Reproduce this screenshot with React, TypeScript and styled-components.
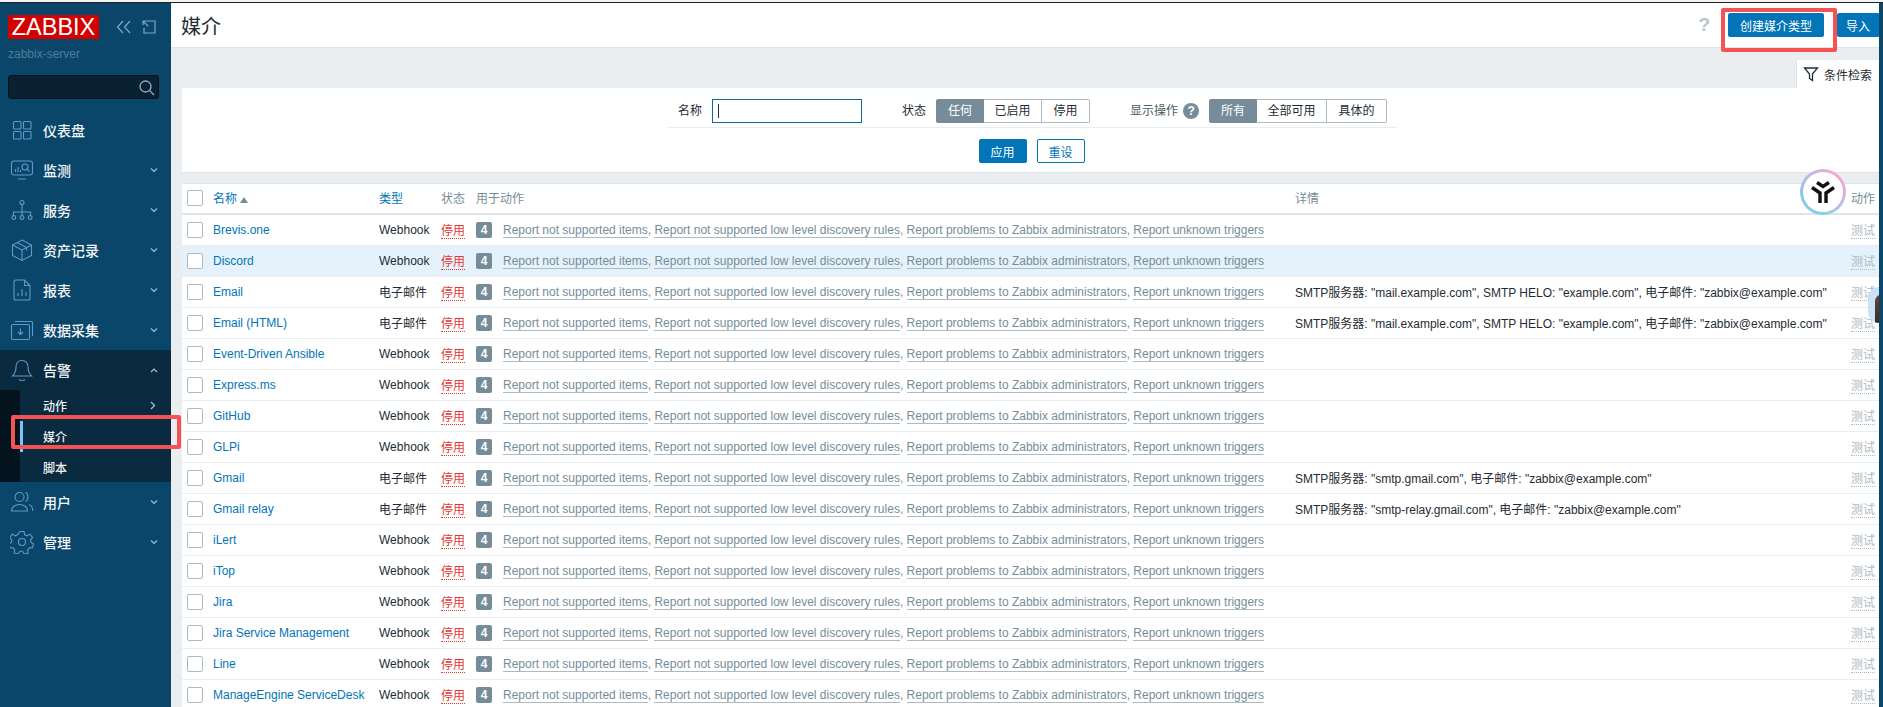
import React from "react";
import styled, { createGlobalStyle } from "styled-components";

const GlobalStyle = createGlobalStyle`
  html, body {
    margin: 0;
    padding: 0;
    background: #ebeef0;
  }
  body {
    font-family: "Liberation Sans", "Noto Sans CJK SC", sans-serif;
    font-size: 12px;
    color: #1f2c33;
  }
`;

const Page = styled.div`
  position: relative;
  display: flex;
  width: 1883px;
  height: 707px;
  overflow: hidden;
  box-sizing: border-box;
  padding-top: 3px;
  background: #ebeef0;
`;

const TopEdge = styled.div`
  position: absolute;
  left: 0;
  right: 0;
  top: 0;
  height: 3px;
  background: #f4f4f4;
  border-bottom: 1px solid #222;
  box-sizing: border-box;
`;

const Sidebar = styled.aside`
  flex: 0 0 171px;
  background: #0a466a;
  display: flex;
  flex-direction: column;
`;

const BrandRow = styled.div`
  display: flex;
  align-items: center;
  height: 24px;
  margin: 12px 0 0 8px;
`;

const Logo = styled.div`
  width: 91px;
  height: 24px;
  background: #d40000;
  color: #fff;
  font-size: 23.5px;
  line-height: 24px;
  text-align: center;
`;

const BrandIcon = styled.svg<{ $gap: number }>`
  width: 16px;
  height: 16px;
  margin-left: ${(p) => p.$gap}px;
  fill: none;
  stroke: #7ea8c7;
  stroke-width: 1.2;
`;

const ServerName = styled.div`
  margin: 8px 0 0 8px;
  height: 15px;
  line-height: 15px;
  font-size: 12px;
  color: #4f7c9a;
`;

const SearchBox = styled.div`
  margin: 13px 12px 0 8px;
  height: 24px;
  box-sizing: border-box;
  background: #0a2131;
  border: 1px solid #051420;
  border-radius: 3px;
  display: flex;
  align-items: center;
  justify-content: flex-end;
  padding-right: 3px;
`;

const SearchIcon = styled.svg`
  width: 17px;
  height: 17px;
  fill: none;
  stroke: #8fb0c8;
  stroke-width: 1.3;
`;

const Nav = styled.nav`
  margin-top: 11px;
  display: flex;
  flex-direction: column;
`;

const NavItem = styled.div<{ $open?: boolean }>`
  display: flex;
  align-items: center;
  height: 40px;
  padding-right: 13px;
  background: ${(p) => (p.$open ? "#0a2a40" : "transparent")};
  color: #f2f5f7;
  font-size: 14px;
  font-weight: 500;
`;

const NavIconSlot = styled.span`
  flex: 0 0 43px;
  display: flex;
  justify-content: center;
`;

const NavIcon = styled.svg`
  width: 24px;
  height: 24px;
  fill: none;
  stroke: #5f9ac6;
  stroke-width: 1.1;
`;

const NavLabel = styled.span`
  flex: 1;
`;

const Chevron = styled.svg`
  width: 8px;
  height: 6px;
  fill: none;
  stroke: #9cc0d8;
  stroke-width: 1.2;
`;

const SubMenu = styled.div`
  height: 92px;
  overflow: hidden;
  background: #04141f;
  padding-left: 20px;
`;

const SubItem = styled.div<{ $active?: boolean }>`
  display: flex;
  align-items: center;
  height: 31px;
  box-sizing: border-box;
  padding-left: ${(p) => (p.$active ? "20px" : "23px")};
  padding-right: 15px;
  background: #0a2a40;
  color: #eef2f5;
  font-size: 12px;
  font-weight: 500;
  border-left: ${(p) => (p.$active ? "3px solid #7cc4f8" : "0")};
`;

const SubLabel = styled.span`
  flex: 1;
`;

const SubChevron = styled.svg`
  width: 6px;
  height: 9px;
  fill: none;
  stroke: #9cc0d8;
  stroke-width: 1.3;
`;

const Main = styled.main`
  flex: 1;
  min-width: 0;
  display: flex;
  flex-direction: column;
  border-right: 4px solid #0a466a;
`;

const Header = styled.header`
  height: 45px;
  flex: 0 0 45px;
  box-sizing: border-box;
  background: #fff;
  border-bottom: 1px solid #dfe4e7;
  display: flex;
  align-items: center;
  padding: 0 0 0 10px;
`;

const Title = styled.h1`
  flex: 1;
  margin: 0;
  font-size: 20px;
  font-weight: 400;
  color: #1f2c33;
`;

const HelpMark = styled.span`
  font-size: 19px;
  font-weight: 700;
  color: #b8c5cc;
  margin-right: 18px;
`;

const PrimaryButton = styled.button<{ $width: number }>`
  width: ${(p) => p.$width}px;
  height: 24px;
  padding: 0;
  border: 1px solid #0275b8;
  border-radius: 2px;
  background: #0275b8;
  color: #fff;
  font-family: inherit;
  font-size: 12px;
`;

const GhostButton = styled.button`
  width: 48px;
  height: 24px;
  padding: 0;
  margin-left: 10px;
  border: 1px solid #0275b8;
  border-radius: 2px;
  background: #fff;
  color: #0275b8;
  font-family: inherit;
  font-size: 12px;
`;

const HeaderImport = styled(PrimaryButton)`
  margin-left: 13px;
  border-radius: 2px 0 0 2px;
`;

const FilterTabs = styled.div`
  flex: 0 0 40px;
  height: 40px;
  display: flex;
  justify-content: flex-end;
  align-items: flex-end;
`;

const FilterTab = styled.div`
  width: 83px;
  height: 28px;
  box-sizing: border-box;
  background: #fff;
  border-left: 1px solid #dfe4e7;
  display: flex;
  align-items: center;
  gap: 5px;
  padding-left: 6px;
  color: #1f2c33;
`;

const FilterIcon = styled.svg`
  width: 16px;
  height: 16px;
  fill: none;
  stroke: #1f2c33;
  stroke-width: 1.3;
`;

const FilterPanel = styled.section`
  flex: 0 0 85px;
  height: 85px;
  box-sizing: border-box;
  margin-left: 11px;
  background: #fff;
  border-bottom: 1px solid #dfe4e7;
  display: flex;
  flex-direction: column;
  align-items: center;
  padding-left: 4px;
`;

const FilterFields = styled.div`
  width: 729px;
  height: 40px;
  box-sizing: border-box;
  border-bottom: 1px solid #ebeef0;
  padding: 11px 0 0 10px;
  display: flex;
  align-items: flex-start;
`;

const FieldLabel = styled.label`
  line-height: 24px;
  color: #1f2c33;
`;

const TextInput = styled.div`
  width: 150px;
  height: 24px;
  box-sizing: border-box;
  margin: 0 40px 0 10px;
  border: 1px solid #0a6ba0;
  display: flex;
  align-items: center;
  padding-left: 5px;
`;

const Caret = styled.span`
  width: 1px;
  height: 14px;
  background: #1f2c33;
`;

const Segments = styled.div`
  display: flex;
  height: 24px;
  margin-left: 10px;
`;

const Segment = styled.span<{ $on?: boolean; $width: number }>`
  width: ${(p) => p.$width}px;
  box-sizing: border-box;
  line-height: 22px;
  text-align: center;
  border: 1px solid ${(p) => (p.$on ? "#768d99" : "#acbbc2")};
  border-left-width: ${(p) => (p.$on ? "1px" : "0")};
  background: ${(p) => (p.$on ? "#768d99" : "#fff")};
  color: ${(p) => (p.$on ? "#fff" : "#1f2c33")};
  &:first-child {
    border-radius: 2px 0 0 2px;
  }
  &:last-child {
    border-radius: 0 2px 2px 0;
  }
`;

const ActionsLabel = styled(FieldLabel)`
  margin-left: 40px;
  color: #4e5c65;
`;

const HelpCircle = styled.span`
  width: 16px;
  height: 16px;
  margin: 4px 0 0 5px;
  border-radius: 50%;
  background: #768d99;
  color: #fff;
  font-size: 12px;
  font-weight: 700;
  line-height: 16px;
  text-align: center;
`;

const FilterButtons = styled.div`
  display: flex;
  padding: 11px 2px 0 0;
`;

const TableCard = styled.section`
  margin: 10px 0 0 11px;
  background: #fff;
  border-top: 1px solid #dfe4e7;
`;

const Table = styled.table`
  width: 100%;
  table-layout: fixed;
  border-collapse: collapse;
`;

const HeadCell = styled.th<{ $link?: boolean; $width?: number }>`
  width: ${(p) => (p.$width ? `${p.$width}px` : "auto")};
  height: 30px;
  padding: 0 0 2px;
  box-sizing: border-box;
  text-align: left;
  font-weight: 400;
  color: ${(p) => (p.$link ? "#0275b8" : "#768d99")};
  border-bottom: 2px solid #dfe4e7;
`;

const HeadCheck = styled.span`
  display: block;
  padding-left: 5px;
`;

const Row = styled.tr<{ $hover?: boolean }>`
  height: 31px;
  background: ${(p) => (p.$hover ? "#e5f2fb" : "#fff")};
  border-bottom: 1px solid #ebeef0;
`;

const Cell = styled.td`
  padding: 0;
  white-space: nowrap;
  overflow: hidden;
`;

const CheckCell = styled(Cell)`
  padding-left: 5px;
`;

const Check = styled.span`
  display: block;
  width: 16px;
  height: 16px;
  box-sizing: border-box;
  background: #fff;
  border: 1px solid #acbbc2;
  border-radius: 2px;
`;

const SortArrow = styled.span`
  display: inline-block;
  margin-left: 3px;
  border-left: 4px solid transparent;
  border-right: 4px solid transparent;
  border-bottom: 6px solid #768d99;
`;

const NameLink = styled.a`
  color: #0275b8;
`;

const Disabled = styled.span`
  color: #e33734;
  border-bottom: 1px dotted #e33734;
`;

const Badge = styled.span`
  display: inline-block;
  width: 16px;
  height: 16px;
  border-radius: 2px;
  background: #768d99;
  color: #fff;
  font-weight: 700;
  line-height: 16px;
  text-align: center;
  vertical-align: middle;
`;

const Actions = styled.span`
  margin-left: 11px;
  color: #768d99;
  vertical-align: middle;
`;

const ActionLink = styled.span`
  border-bottom: 1px solid #acbbc2;
`;

const TestLink = styled.span`
  color: #acbbc2;
  border-bottom: 1px dotted #acbbc2;
`;

const Annotation = styled.div<{ $x: number; $y: number; $w: number; $h: number }>`
  position: absolute;
  left: ${(p) => p.$x}px;
  top: ${(p) => p.$y}px;
  width: ${(p) => p.$w}px;
  height: ${(p) => p.$h}px;
  box-sizing: border-box;
  border: 4px solid #f55353;
  border-radius: 2px;
`;

const FloatBall = styled.div`
  position: absolute;
  left: 1800px;
  top: 169px;
  width: 46px;
  height: 46px;
  box-sizing: border-box;
  padding: 3px;
  border-radius: 50%;
  background: conic-gradient(from 200deg, #7fd0e8, #8cc4ea, #c4b6ea, #eeaad8, #e6a8dc, #a8c8ea, #7fd0e8);
`;

const FloatInner = styled.div`
  width: 100%;
  height: 100%;
  border-radius: 50%;
  background: #fff;
  display: flex;
  align-items: center;
  justify-content: center;
`;

const SideTab = styled.div`
  position: absolute;
  left: 1868px;
  top: 287px;
  width: 11px;
  height: 36px;
  border-radius: 18px 0 0 18px;
  background: #c8e2fb;
  overflow: hidden;
`;

const SideTabFigure = styled.div`
  margin: 8px 0 0 7px;
  width: 12px;
  height: 30px;
  border-radius: 6px 0 0 0;
  background: linear-gradient(#6b4436, #3c2620);
`;

const ICONS: Record<string, React.ReactNode> = {
  dashboard: (
    <>
      <rect x="3.5" y="3.5" width="7.5" height="7.5" rx="1" />
      <rect x="13.5" y="3.5" width="7.5" height="7.5" rx="1" />
      <rect x="3.5" y="13.5" width="7.5" height="7.5" rx="1" />
      <rect x="13.5" y="13.5" width="7.5" height="7.5" rx="1" />
    </>
  ),
  monitoring: (
    <>
      <rect x="1.5" y="3" width="21" height="14" rx="2.5" />
      <path d="M8 21h8M5.5 14v-3M8 14v-5M10.5 14v-2" />
      <circle cx="15" cy="9" r="3" />
      <path d="M17.2 11.2l2.3 2.3" />
    </>
  ),
  services: (
    <>
      <circle cx="12" cy="4.5" r="2" />
      <path d="M12 6.5V14M3.5 17v-3h17v3M12 14v3" />
      <circle cx="3.8" cy="19.5" r="1.9" />
      <circle cx="12" cy="19.5" r="1.9" />
      <circle cx="20.2" cy="19.5" r="1.9" />
    </>
  ),
  inventory: (
    <>
      <path d="M12 2l9.5 5v10.5L12 22.5l-9.5-5V7z" />
      <path d="M2.5 7l9.5 5 9.5-5M12 12v10.5M7 4.5l9.5 5v3" />
    </>
  ),
  reports: (
    <>
      <path d="M6 2h8.5L20 7.500V20a2 2 0 0 1-2 2H6a2 2 0 0 1-2-2V4a2 2 0 0 1 2-2z" />
      <path d="M14.500 2v5.500H20M8 18v-3M12 18v-7M16 18v-4" />
    </>
  ),
  collection: (
    <>
      <rect x="1.500" y="6.500" width="18" height="15" rx="1.500" />
      <path d="M5 3.500h16.500a1 1 0 0 1 1 1V18M10.500 10.500v6M8 14l2.500 2.500L13 14" />
    </>
  ),
  alerts: (
    <>
      <path d="M12 2.500c-4 0-6 3-6 6.500 0 4-1 6.500-3.500 9h19c-2.500-2.500-3.500-5-3.500-9 0-3.500-2-6.500-6-6.500z" />
      <path d="M9 21.500c1.500 1 4.500 1 6 0" />
    </>
  ),
  users: (
    <>
      <circle cx="9.500" cy="7" r="4.500" />
      <path d="M1.500 21c0-4 3.500-6.500 8-6.500s8 2.500 8 6.500h-16zM15.500 2.500c3 .8 3.500 7.500 0 9M19 14.500c2.500 1 3.800 3.500 3.800 6.500" />
    </>
  ),
  administration: (
    <>
      <circle cx="12" cy="12" r="3.500" />
      <path d="M10 1.500h4l.8 3.300 2.200 1 3-1.700 2.600 3.300-2 2.500.3 2.400 2.600 1.700-1 3.700-3.200.2-1.600 1.900.4 3.200-3.800 1-1.800-2.700h-2.600l-1.800 2.700-3.800-1 .4-3.200-1.600-1.900-3.200-.2-1-3.700 2.600-1.700.3-2.400-2-2.500 2.600-3.300 3 1.700 2.200-1z" />
    </>
  ),
};

const MENU_TOP = [
  { icon: "monitoring", label: "监测" },
  { icon: "services", label: "服务" },
  { icon: "inventory", label: "资产记录" },
  { icon: "reports", label: "报表" },
  { icon: "collection", label: "数据采集" },
];

const MENU_BOTTOM = [
  { icon: "users", label: "用户" },
  { icon: "administration", label: "管理" },
];

const SMTP_MAIL = 'SMTP服务器: "mail.example.com", SMTP HELO: "example.com", 电子邮件: "zabbix@example.com"';

const MEDIA: { name: string; type: string; details?: string }[] = [
  { name: "Brevis.one", type: "Webhook" },
  { name: "Discord", type: "Webhook" },
  { name: "Email", type: "电子邮件", details: SMTP_MAIL },
  { name: "Email (HTML)", type: "电子邮件", details: SMTP_MAIL },
  { name: "Event-Driven Ansible", type: "Webhook" },
  { name: "Express.ms", type: "Webhook" },
  { name: "GitHub", type: "Webhook" },
  { name: "GLPi", type: "Webhook" },
  { name: "Gmail", type: "电子邮件", details: 'SMTP服务器: "smtp.gmail.com", 电子邮件: "zabbix@example.com"' },
  { name: "Gmail relay", type: "电子邮件", details: 'SMTP服务器: "smtp-relay.gmail.com", 电子邮件: "zabbix@example.com"' },
  { name: "iLert", type: "Webhook" },
  { name: "iTop", type: "Webhook" },
  { name: "Jira", type: "Webhook" },
  { name: "Jira Service Management", type: "Webhook" },
  { name: "Line", type: "Webhook" },
  { name: "ManageEngine ServiceDesk", type: "Webhook" },
];

const ACTIONS = [
  "Report not supported items",
  "Report not supported low level discovery rules",
  "Report problems to Zabbix administrators",
  "Report unknown triggers",
];

function MenuRow({ icon, label, noArrow, open }: { icon: string; label: string; noArrow?: boolean; open?: boolean }) {
  return (
    <NavItem $open={open}>
      <NavIconSlot>
        <NavIcon viewBox="0 0 24 24">{ICONS[icon]}</NavIcon>
      </NavIconSlot>
      <NavLabel>{label}</NavLabel>
      {!noArrow && (
        <Chevron viewBox="0 0 8 6">
          <path d={open ? "M1 5l3-3 3 3" : "M1 1.500l3 3 3-3"} />
        </Chevron>
      )}
    </NavItem>
  );
}

function App() {
  return (
    <Page>
      <GlobalStyle />
      <TopEdge />
      <Sidebar>
        <BrandRow>
          <Logo>ZABBIX</Logo>
          <BrandIcon $gap={17} viewBox="0 0 16 16">
            <path d="M7 2L1.500 8 7 14M14 2L8.500 8 14 14" />
          </BrandIcon>
          <BrandIcon $gap={9} viewBox="0 0 16 16">
            <path d="M5 2h9v12H3V9M2 2l5 5M2 2h4M2 2v4" />
          </BrandIcon>
        </BrandRow>
        <ServerName>zabbix-server</ServerName>
        <SearchBox>
          <SearchIcon viewBox="0 0 17 17">
            <circle cx="7.500" cy="7.500" r="5.500" />
            <path d="M11.500 11.500l4.500 4.500" />
          </SearchIcon>
        </SearchBox>
        <Nav>
          <MenuRow icon="dashboard" label="仪表盘" noArrow />
          {MENU_TOP.map((m) => (
            <MenuRow key={m.label} icon={m.icon} label={m.label} />
          ))}
          <MenuRow icon="alerts" label="告警" open />
          <SubMenu>
            <SubItem>
              <SubLabel>动作</SubLabel>
              <SubChevron viewBox="0 0 6 9">
                <path d="M1 1l3.500 3.500L1 8" />
              </SubChevron>
            </SubItem>
            <SubItem $active>媒介</SubItem>
            <SubItem>脚本</SubItem>
          </SubMenu>
          {MENU_BOTTOM.map((m) => (
            <MenuRow key={m.label} icon={m.icon} label={m.label} />
          ))}
        </Nav>
      </Sidebar>

      <Main>
        <Header>
          <Title>媒介</Title>
          <HelpMark>?</HelpMark>
          <PrimaryButton $width={96}>创建媒介类型</PrimaryButton>
          <HeaderImport $width={42}>导入</HeaderImport>
        </Header>
        <FilterTabs>
          <FilterTab>
            <FilterIcon viewBox="0 0 16 16">
              <path d="M1.500 2h13L9.500 8v6.500l-3-2V8z" />
            </FilterIcon>
            条件检索
          </FilterTab>
        </FilterTabs>
        <FilterPanel>
          <FilterFields>
            <FieldLabel>名称</FieldLabel>
            <TextInput>
              <Caret />
            </TextInput>
            <FieldLabel>状态</FieldLabel>
            <Segments>
              <Segment $on $width={48}>任何</Segment>
              <Segment $width={58}>已启用</Segment>
              <Segment $width={48}>停用</Segment>
            </Segments>
            <ActionsLabel>显示操作</ActionsLabel>
            <HelpCircle>?</HelpCircle>
            <Segments>
              <Segment $on $width={48}>所有</Segment>
              <Segment $width={70}>全部可用</Segment>
              <Segment $width={60}>具体的</Segment>
            </Segments>
          </FilterFields>
          <FilterButtons>
            <PrimaryButton $width={48}>应用</PrimaryButton>
            <GhostButton>重设</GhostButton>
          </FilterButtons>
        </FilterPanel>
        <TableCard>
          <Table>
            <thead>
              <tr>
                <HeadCell $width={31}>
                  <HeadCheck>
                    <Check />
                  </HeadCheck>
                </HeadCell>
                <HeadCell $link $width={166}>
                  名称
                  <SortArrow />
                </HeadCell>
                <HeadCell $link $width={62}>类型</HeadCell>
                <HeadCell $width={35}>状态</HeadCell>
                <HeadCell $width={819}>用于动作</HeadCell>
                <HeadCell $width={556}>详情</HeadCell>
                <HeadCell>动作</HeadCell>
              </tr>
            </thead>
            <tbody>
              {MEDIA.map((item) => (
                <Row key={item.name} $hover={item.name === "Discord"}>
                  <CheckCell>
                    <Check />
                  </CheckCell>
                  <Cell>
                    <NameLink>{item.name}</NameLink>
                  </Cell>
                  <Cell>{item.type}</Cell>
                  <Cell>
                    <Disabled>停用</Disabled>
                  </Cell>
                  <Cell>
                    <Badge>4</Badge>
                    <Actions>
                      {ACTIONS.map((a, i) => (
                        <React.Fragment key={a}>
                          <ActionLink>{a}</ActionLink>
                          {i < ACTIONS.length - 1 ? ", " : ""}
                        </React.Fragment>
                      ))}
                    </Actions>
                  </Cell>
                  <Cell>{item.details}</Cell>
                  <Cell>
                    <TestLink>测试</TestLink>
                  </Cell>
                </Row>
              ))}
            </tbody>
          </Table>
        </TableCard>
      </Main>

      <Annotation $x={11} $y={415} $w={170} $h={34} />
      <Annotation $x={1721} $y={8} $w={116} $h={44} />
      <FloatBall>
        <FloatInner>
          <svg width="26" height="24" viewBox="0 0 26 24" fill="none" stroke="#111" strokeWidth="3.400">
            <path d="M7 2.500l6 4 6-4M2 7.500l8 5.500v10M24 7.500l-8 5.500v10" />
          </svg>
        </FloatInner>
      </FloatBall>
      <SideTab>
        <SideTabFigure />
      </SideTab>
    </Page>
  );
}

export default App;
